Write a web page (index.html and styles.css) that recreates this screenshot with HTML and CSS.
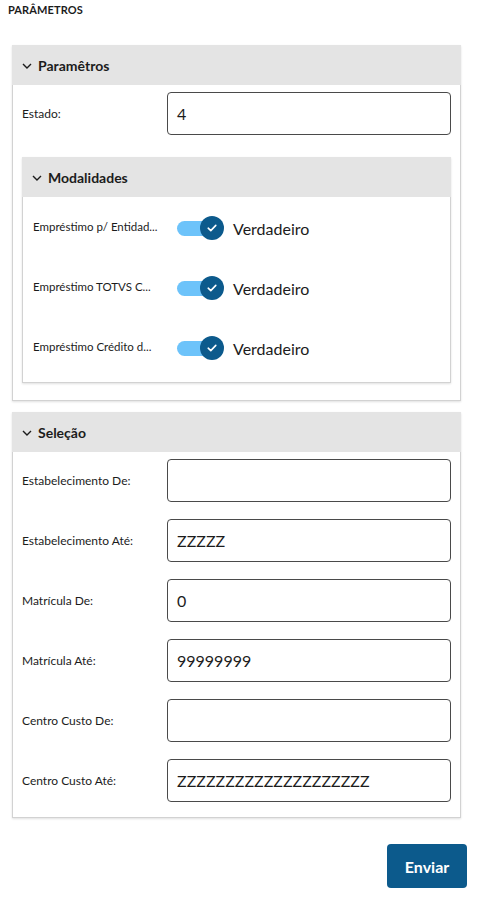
FILE: index.html
```html
<!DOCTYPE html>
<html lang="pt-BR">
<head>
<meta charset="utf-8">
<title>Parâmetros</title>
<link rel="stylesheet" href="styles.css">
</head>
<body>
<div class="page">
  <h1 class="page-title">PARÂMETROS</h1>

  <section class="panel">
    <header class="panel-head">
      <svg class="chev" viewBox="0 0 10 6" width="10" height="6"><path d="M1 1 L5 5 L9 1" fill="none" stroke="#1c1c1c" stroke-width="1.4"/></svg>
      <span>Paramêtros</span>
    </header>
    <div class="panel-body">
      <div class="row">
        <label class="lbl">Estado:</label>
        <div class="input">4</div>
      </div>

      <section class="panel inner">
        <header class="panel-head">
          <svg class="chev" viewBox="0 0 10 6" width="10" height="6"><path d="M1 1 L5 5 L9 1" fill="none" stroke="#1c1c1c" stroke-width="1.4"/></svg>
          <span>Modalidades</span>
        </header>
        <div class="panel-body inner-body">
          <div class="trow">
            <label class="lbl tlbl">Empréstimo p/ Entidad...</label>
            <div class="switch"><span class="track"></span><span class="knob"><svg viewBox="0 0 10 8" width="10" height="8"><path d="M1.2 4.2 L3.8 6.6 L8.8 1.4" fill="none" stroke="#fff" stroke-width="1.6" stroke-linecap="round" stroke-linejoin="round"/></svg></span></div>
            <span class="sval">Verdadeiro</span>
          </div>
          <div class="trow">
            <label class="lbl tlbl">Empréstimo TOTVS C...</label>
            <div class="switch"><span class="track"></span><span class="knob"><svg viewBox="0 0 10 8" width="10" height="8"><path d="M1.2 4.2 L3.8 6.6 L8.8 1.4" fill="none" stroke="#fff" stroke-width="1.6" stroke-linecap="round" stroke-linejoin="round"/></svg></span></div>
            <span class="sval">Verdadeiro</span>
          </div>
          <div class="trow">
            <label class="lbl tlbl">Empréstimo Crédito d...</label>
            <div class="switch"><span class="track"></span><span class="knob"><svg viewBox="0 0 10 8" width="10" height="8"><path d="M1.2 4.2 L3.8 6.6 L8.8 1.4" fill="none" stroke="#fff" stroke-width="1.6" stroke-linecap="round" stroke-linejoin="round"/></svg></span></div>
            <span class="sval">Verdadeiro</span>
          </div>
        </div>
      </section>
    </div>
  </section>

  <section class="panel second">
    <header class="panel-head">
      <svg class="chev" viewBox="0 0 10 6" width="10" height="6"><path d="M1 1 L5 5 L9 1" fill="none" stroke="#1c1c1c" stroke-width="1.4"/></svg>
      <span>Seleção</span>
    </header>
    <div class="panel-body sel-body">
      <div class="row"><label class="lbl">Estabelecimento De:</label><div class="input"></div></div>
      <div class="row"><label class="lbl">Estabelecimento Até:</label><div class="input">ZZZZZ</div></div>
      <div class="row"><label class="lbl">Matrícula De:</label><div class="input">0</div></div>
      <div class="row"><label class="lbl">Matrícula Até:</label><div class="input">99999999</div></div>
      <div class="row"><label class="lbl">Centro Custo De:</label><div class="input"></div></div>
      <div class="row"><label class="lbl">Centro Custo Até:</label><div class="input">ZZZZZZZZZZZZZZZZZZZZ</div></div>
    </div>
  </section>

  <div class="actions">
    <button class="btn">Enviar</button>
  </div>
</div>
</body>
</html>
```

FILE: styles.css
```css
* { box-sizing: border-box; }
html, body { margin: 0; padding: 0; background: #fff; }
body {
  font-family: "Lato", "Noto Sans", sans-serif;
  color: #1c1c1c;
}
.page { padding: 4px 18px 0 12px; }
.page-title {
  margin: 0 0 29px -4px;
  font-size: 11px;
  font-weight: 700;
  line-height: 12px;
  letter-spacing: 0.1px;
  color: #1c1c1c;
}
.panel {
  border: 1px solid #d2d2d2;
  background: #fff;
  box-shadow: 0 1px 2px rgba(0,0,0,0.12);
  margin-right: 6px;
}
.panel-head {
  height: 40px;
  background: #e4e4e4;
  display: flex;
  align-items: center;
  padding-left: 10px;
  font-size: 14px;
  font-weight: 700;
  color: #1c1c1c;
  margin: -1px -1px 0 -1px;
}
.chev { margin-right: 6px; margin-top: 1px; }
.panel-body {
  padding: 7px 9px 17px 9px;
}
.row {
  display: flex;
  align-items: center;
  height: 43px;
}
.row + .row { margin-top: 17px; }
.lbl {
  width: 145px;
  flex: none;
  font-size: 12px;
  color: #1c1c1c;
}
.input {
  flex: 1;
  height: 43px;
  border: 1px solid #4a4a4a;
  border-radius: 4px;
  padding: 0 9px;
  display: flex;
  align-items: center;
  font-size: 16px;
  color: #1c1c1c;
}
.inner { margin-top: 22px; margin-right: 0; }
.inner .panel-head { padding-left: 10px; }
.inner-body { padding: 1px 10px 4px 10px; }
.trow {
  display: flex;
  align-items: center;
  height: 60px;
}
.tlbl {
  width: 144px;
  white-space: nowrap;
  font-size: 11.5px;
  margin-top: -3px;
}
.switch {
  position: relative;
  width: 47px;
  height: 24px;
  flex: none;
}
.track {
  position: absolute;
  left: 0;
  top: 5px;
  width: 36px;
  height: 15px;
  border-radius: 8px;
  background: #6dc3fa;
}
.knob {
  position: absolute;
  left: 23px;
  top: 0;
  width: 24px;
  height: 24px;
  border-radius: 50%;
  background: #0c5a8c;
  display: flex;
  align-items: center;
  justify-content: center;
}
.sval {
  margin-left: 9px;
  font-size: 16px;
  color: #1c1c1c;
}
.second { margin-top: 11px; }
.sel-body { padding-top: 7px; padding-bottom: 15px; }
.actions {
  display: flex;
  justify-content: flex-end;
  margin: 26px 0 0 0;
}
.btn {
  width: 80px;
  height: 44px;
  border: 0;
  border-radius: 4px;
  background: #0c5a8c;
  color: #fff;
  font-family: "Lato", "Noto Sans", sans-serif;
  font-size: 16px;
  font-weight: 700;
}
```
